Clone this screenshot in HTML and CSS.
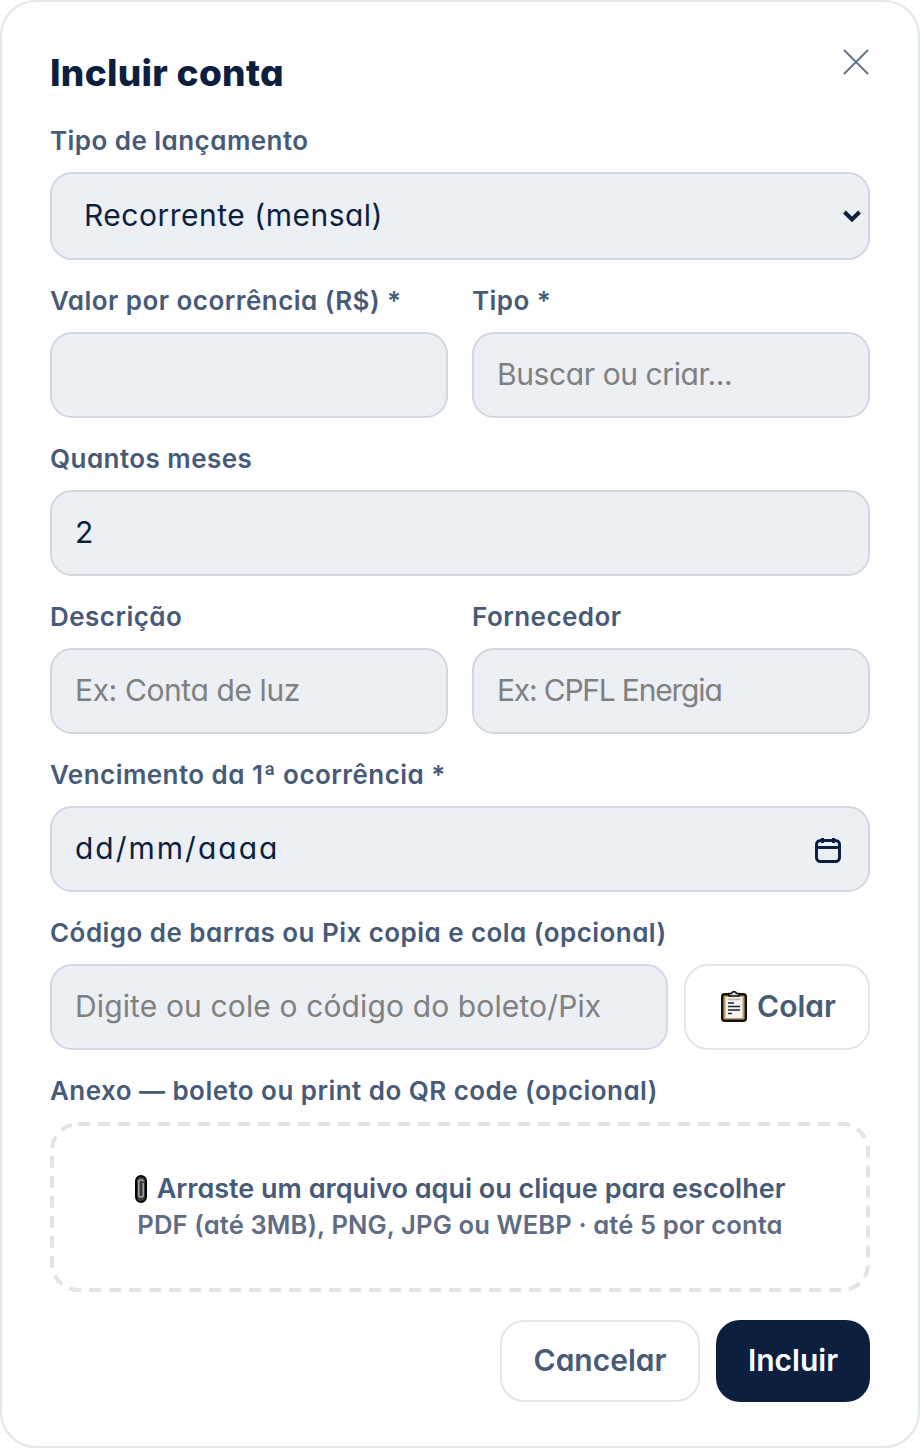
FILE: index.html
```html
<!DOCTYPE html>
<html lang="pt-BR">
<head>
    <meta charset="UTF-8">
    <meta name="viewport" content="width=device-width, initial-scale=1.0">
    <title>Incluir conta</title>
    <link rel="stylesheet" href="styles.css">
</head>
<body>

    <div class="modal">
        <div class="modal-header">
            <h1>Incluir conta</h1>
            <button class="close-button" type="button" aria-label="Fechar">
                <svg width="26" height="26" viewBox="0 0 26 26"><path d="M1 1L25 25M25 1L1 25" fill="none" stroke="#64748b" stroke-width="2"/></svg>
            </button>
        </div>

        <form class="form">
            <div class="field">
                <label>Tipo de lançamento</label>
                <div class="select-wrap">
                    <select class="input select">
                        <option>Recorrente (mensal)</option>
                    </select>
                    <svg class="select-arrow" width="20" height="14" viewBox="0 0 20 14"><path d="M2.5 3L10 10.5L17.5 3" fill="none" stroke="#0c1f3f" stroke-width="4"/></svg>
                </div>
            </div>

            <div class="row">
                <div class="field">
                    <label>Valor por ocorrência (R$) *</label>
                    <input class="input" type="text">
                </div>
                <div class="field">
                    <label>Tipo *</label>
                    <input class="input tight" type="text" placeholder="Buscar ou criar...">
                </div>
            </div>

            <div class="field">
                <label>Quantos meses</label>
                <input class="input" type="text" value="2">
            </div>

            <div class="row">
                <div class="field">
                    <label>Descrição</label>
                    <input class="input tight" type="text" placeholder="Ex: Conta de luz">
                </div>
                <div class="field">
                    <label>Fornecedor</label>
                    <input class="input tighter" type="text" placeholder="Ex: CPFL Energia">
                </div>
            </div>

            <div class="field">
                <label>Vencimento da 1ª ocorrência *</label>
                <div class="select-wrap">
                    <input class="input date" type="text" value="dd/mm/aaaa">
                    <svg class="date-icon" width="26" height="26" viewBox="0 0 26 26" fill="none" stroke="#0c1f3f" stroke-width="3"><rect x="1.5" y="3.5" width="23" height="21" rx="4"/><path d="M1.5 10.5H24.5M7.5 1V6M18.5 1V6"/></svg>
                </div>
            </div>

            <div class="field">
                <label>Código de barras ou Pix copia e cola (opcional)</label>
                <div class="code-row">
                    <input class="input" type="text" placeholder="Digite ou cole o código do boleto/Pix">
                    <button class="button paste-button" type="button">
                        <svg width="26" height="32" viewBox="0 0 26 32"><rect x="1.2" y="4.2" width="23.6" height="26.6" rx="2.5" fill="#c19a6b" stroke="#111" stroke-width="2.4"/><rect x="4.5" y="7" width="17" height="21" fill="#f4f4f4"/><path d="M8 6V3.5H10.5C11 1 15 1 15.5 3.5H18V6Z" fill="#ddd" stroke="#111" stroke-width="1.6"/><rect x="6.5" y="8.5" width="13" height="1.8" fill="#bbb"/><path d="M7 13H13M7 16.5H19M7 20H19M7 23.5H11" stroke="#222" stroke-width="1.4"/></svg>
                        Colar
                    </button>
                </div>
            </div>

            <div class="field">
                <label>Anexo — boleto ou print do QR code (opcional)</label>
                <div class="dropzone">
                    <svg class="dropzone-border" width="100%" height="100%"><rect/></svg>
                    <div class="dropzone-title">
                        <svg width="12" height="28" viewBox="0 0 12 28"><rect x="1" y="1" width="10" height="26" rx="5" fill="#3a3a3a" stroke="#000" stroke-width="2"/><path d="M8.2 8V20.5C8.2 22.5 3.8 22.5 3.8 20.5V6.5C3.8 4.2 8.2 4.2 8.2 6.5" fill="none" stroke="#c8c8c8" stroke-width="1.1"/></svg>
                        Arraste um arquivo aqui ou clique para escolher
                    </div>
                    <div class="dropzone-hint">PDF (até 3MB), PNG, JPG ou WEBP · até 5 por conta</div>
                </div>
            </div>

            <div class="actions">
                <button class="button cancel-button" type="button">Cancelar</button>
                <button class="button submit-button" type="button">Incluir</button>
            </div>
        </form>
    </div>

</body>
</html>
```

FILE: styles.css
```css
/* General Reset */
* { margin: 0; padding: 0; box-sizing: border-box; }
body {
    font-family: Inter, "Open Sans", sans-serif;
    font-feature-settings: "cv11";
    background: white;
    color: #0c1f3f;
}
.modal {
    height: 1448px;
    background: white;
    border: 2px solid #e2e6ea;
    border-radius: 36px;
    padding: 46px 48px;
}
.modal-header {
    display: flex;
    justify-content: space-between;
    align-items: flex-start;
    margin-bottom: 26px;
}
h1 {
    font-size: 37px;
    font-weight: 800;
    line-height: 50px;
    letter-spacing: 0.3px;
}
.close-button {
    background: none;
    border: none;
    display: flex;
    margin-top: 1px;
    margin-right: 1px;
    cursor: pointer;
}
.form {
    display: flex;
    flex-direction: column;
    gap: 24px;
}
.row {
    display: grid;
    grid-template-columns: 1fr 1fr;
    gap: 24px;
}
.field {
    min-width: 0;
}
label {
    display: block;
    font-size: 26px;
    font-weight: 600;
    line-height: 34px;
    letter-spacing: 0.45px;
    color: #475a78;
    margin-bottom: 14px;
}
.input {
    display: block;
    width: 100%;
    height: 86px;
    background: #eceff4;
    color: #0c1f3f;
    border: 2px solid #d3d8e0;
    border-radius: 22px;
    padding: 0 24px 3px 23px;
    font-family: inherit;
    font-feature-settings: inherit;
    font-size: 30px;
    outline: none;
}
.input::placeholder { color: #808080; opacity: 1; letter-spacing: 0.13px; }
.input.tight::placeholder { letter-spacing: -0.4px; }
.input.tighter::placeholder { letter-spacing: -1.2px; }
.date { letter-spacing: 2px; }
.select {
    height: 88px;
    padding-left: 32px;
    letter-spacing: 0.5px;
    appearance: none;
}
.select-wrap {
    position: relative;
}
.select-arrow {
    position: absolute;
    right: 8px;
    top: 37px;
}
.date-icon {
    position: absolute;
    right: 29px;
    top: 31px;
}
.code-row {
    display: flex;
    gap: 16px;
}
.button {
    height: 82px;
    border-radius: 24px;
    padding-bottom: 2px;
    font-family: inherit;
    font-feature-settings: inherit;
    font-size: 30px;
    font-weight: 600;
    cursor: pointer;
}
.paste-button {
    flex: 0 0 186px;
    height: 86px;
    display: flex;
    align-items: center;
    justify-content: center;
    gap: 10px;
    padding-left: 3px;
    background: white;
    color: #475a78;
    border: 2px solid #e2e6ea;
}
.dropzone {
    position: relative;
    height: 170px;
    display: flex;
    flex-direction: column;
    align-items: center;
    justify-content: center;
    font-size: 27px;
    line-height: 36px;
    font-weight: 600;
}
.dropzone-border {
    position: absolute;
    inset: 0;
}
.dropzone-border rect {
    x: 2px;
    y: 2px;
    width: calc(100% - 4px);
    height: calc(100% - 4px);
    rx: 26px;
    fill: none;
    stroke: #e2e4e8;
    stroke-width: 4;
    stroke-dasharray: 12 8;
}
.dropzone-title {
    display: flex;
    align-items: center;
    gap: 10px;
    color: #475a78;
}
.dropzone-hint {
    font-size: 25.6px;
    font-weight: 600;
    letter-spacing: 0.1px;
    color: #5f6c84;
}
.actions {
    display: flex;
    justify-content: flex-end;
    gap: 16px;
    margin-top: 4px;
}
.cancel-button {
    width: 200px;
    background: white;
    color: #475a78;
    border: 2px solid #e2e6ea;
}
.submit-button {
    width: 154px;
    background: #0c1f3f;
    color: white;
    border: none;
}
```
